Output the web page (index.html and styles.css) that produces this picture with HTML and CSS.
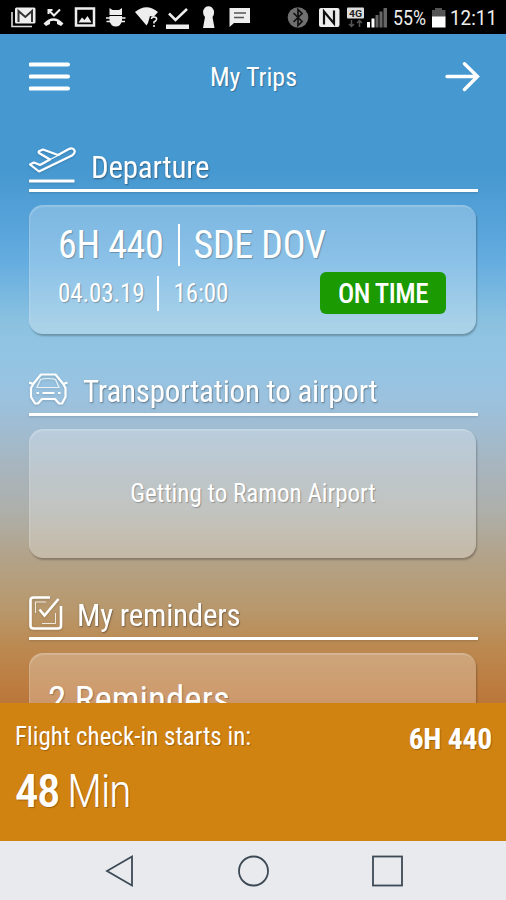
FILE: index.html
```html
<!DOCTYPE html>
<html lang="en">
<head>
    <meta charset="UTF-8">
    <meta name="viewport" content="width=device-width, initial-scale=1.0">
    <title>My Trips</title>
    <link rel="stylesheet" href="styles.css">
</head>
<body>
    <div class="status-bar">
        <svg class="status-icons" width="506" height="34" viewBox="0 0 506 34">
            <!-- mail -->
            <path d="M12 12V26.500H32" fill="none" stroke="#ddd" stroke-width="1.6"/>
            <rect x="15" y="7.500" width="20.500" height="16" rx="1.500" fill="#eee"/>
            <path d="M18.500 22V11L25.300 17L32 11V22" fill="none" stroke="#333" stroke-width="2"/>
            <!-- missed call -->
            <path d="M43.500 23.500Q53.500 13 63.500 23.500L61 26L57 24V21.500Q53.500 20 50 21.500V24L46 26Z" fill="#eee"/>
            <path d="M48.500 14V10H52.500M49 10.500L54 15.500L60 9.500" fill="none" stroke="#eee" stroke-width="2"/>
            <!-- picture -->
            <rect x="76" y="8.500" width="18" height="17" fill="none" stroke="#eee" stroke-width="2.500"/>
            <path d="M78.500 22.500L82 17.500L84.500 20L87.500 16L91.500 22.500Z" fill="#eee"/>
            <!-- debug -->
            <path d="M109.500 15V8L112.500 10H119L122 8V15ZM109.500 16V21Q111 26.500 115.800 26.500Q120.500 26.500 122 21V16Z" fill="#eee"/>
            <path d="M106 18H125.500M106.500 21.500H125" stroke="#eee" stroke-width="1.500"/>
            <!-- wifi -->
            <path d="M135 12Q146.500 2.500 158 12L153.500 17L150 16L148 23L146.500 25.500Z" fill="#eee"/>
            <path d="M151.500 19Q151.500 17 154 17Q157 17 156.500 19.500Q156 21 154 22V23.500M154 25V27" fill="none" stroke="#eee" stroke-width="1.600"/>
            <!-- download done -->
            <path d="M169 13.500L175.500 20L187 9" fill="none" stroke="#eee" stroke-width="2.500"/>
            <rect x="166" y="24.500" width="23" height="4.500" fill="#eee"/>
            <!-- keyhole -->
            <path d="M205 7.500Q208.500 5 212 7.500Q216 12 212.500 17L214.500 28H203L205 17Q201 12 205 7.500Z" fill="#eee"/>
            <!-- message -->
            <path d="M229.500 8H250V23H234L229.500 27Z" fill="#eee"/>
            <path d="M234 13H246M234 17.500H244" stroke="#555" stroke-width="1.500"/>
            <!-- bluetooth -->
            <circle cx="298" cy="17.500" r="10.300" fill="#707070"/>
            <path d="M293.500 13L302 21.500L298 25.500V9.500L302 13.500L293.500 22" fill="none" stroke="#111" stroke-width="1.700"/>
            <!-- nfc -->
            <rect x="319" y="8" width="20.500" height="19" rx="2" fill="#eee"/>
            <path d="M324 24.500V11.500L334 23.500V10.500" fill="none" stroke="#111" stroke-width="2.200"/>
            <!-- mobile data -->
            <rect x="347" y="7.500" width="17" height="11" rx="1" fill="#ddd"/>
            <path d="M351.500 20V27M349 24L351.500 26.500L354 24M359.500 27V20M357 23L359.500 20.500L362 23" fill="none" stroke="#555" stroke-width="1.500"/>
            <text class="network" x="349" y="16.500" textLength="13" lengthAdjust="spacingAndGlyphs">4G</text>
            <!-- signal -->
            <path d="M367 22H370V27.500H367ZM371.500 18.500H374.500V27.500H371.500Z" fill="#fff"/>
            <path d="M375.500 15H378.500V27.500H375.500ZM379.500 11.500H382.500V27.500H379.500ZM383.500 8H387V27.500H383.500Z" fill="#666"/>
            <!-- battery -->
            <path d="M432 10H435V8H442V10H445.500V17H432Z" fill="#555"/>
            <rect x="432" y="16.500" width="13.500" height="11" fill="#fff"/>
            <text class="status-text" x="393" y="25" textLength="33" lengthAdjust="spacingAndGlyphs">55%</text>
            <text class="status-text" x="450" y="25" textLength="47" lengthAdjust="spacingAndGlyphs">12:11</text>
        </svg>
    </div>

    <main class="trips">
        <header class="top-bar">
            <svg width="42" height="30" viewBox="0 0 42 30"><path d="M1.500 2.500H39M1.500 14.500H39M1.500 26.500H39" stroke="#fff" stroke-width="4" stroke-linecap="round"/></svg>
            <h1>My Trips</h1>
            <svg width="35" height="30" viewBox="0 0 35 30"><path d="M2 14.500H32M19.500 1.800L32.500 14.500L19.500 27.500" fill="none" stroke="#fff" stroke-width="3.400" stroke-linecap="round"/></svg>
        </header>

        <section>
            <h2 class="departure-title">
                <svg width="47" height="36" viewBox="0 0 47 36">
                    <path d="M1 17.500L5 15.500L11 18L21 12.500L10 6Q9 5 10.500 4L14 2.500L29 8L39 2.500Q44 0 45.500 3.500Q46.500 6 43 8.500L10 24.500Z" fill="none" stroke="#fff" stroke-width="2.2" stroke-linejoin="round"/>
                    <path d="M21 12.500L31 7.500" stroke="#fff" stroke-width="1.2"/>
                    <path d="M0 34H45.500" stroke="#fff" stroke-width="3"/>
                </svg>
                <span>Departure</span>
            </h2>
            <div class="card flight">
                <div class="flight-row flight-name"><span>6H 440</span><i></i><span>SDE DOV</span></div>
                <div class="flight-row flight-date">
                    <span>04.03.19</span><i></i><span>16:00</span>
                    <b class="badge">ON TIME</b>
                </div>
            </div>
        </section>

        <section>
            <h2 class="transport-title">
                <svg width="40" height="34" viewBox="0 0 40 34">
                    <g fill="none" stroke="#fff" stroke-width="2.2" stroke-linejoin="round">
                        <path d="M12 1.500H26.500L33.500 10L36.500 15V24L33 30.500H30L26 26H13L9 30.500H6L2 24V15L5 10Z"/>
                        <path d="M0 9.500L4 11M38.500 9.500L34.500 11"/>
                        <path d="M8 14.500L11.500 6.500Q19 4.500 26.500 6.500L30 14.500Z" stroke-width="1.2" opacity="0.8"/>
                        <path d="M13.500 20H25.500M7.500 20H10M29 20H31.500" stroke-width="1.8"/>
                    </g>
                </svg>
                <span>Transportation to airport</span>
            </h2>
            <div class="card transport"><span>Getting to Ramon Airport</span></div>
        </section>

        <section>
            <h2 class="reminders-title">
                <svg width="35" height="36" viewBox="0 0 35 36">
                    <g fill="none" stroke="#fff" stroke-width="2.6">
                        <path d="M21 2.500H4.500Q1.500 2.500 1.500 5.500V30.500Q1.500 33.500 4.500 33.500H29Q32 33.500 32 30.500V11"/>
                        <path d="M10.500 14.500L15.500 20.500L29.500 4"/>
                        <path d="M17 7H6.500V18M13 28.500H26.500V18" stroke-width="1" opacity="0.8"/>
                    </g>
                </svg>
                <span>My reminders</span>
            </h2>
            <div class="card reminders"><span>2 Reminders</span></div>
        </section>
    </main>

    <footer class="checkin">
        <div class="checkin-row">
            <span>Flight check-in starts in:</span>
            <b>6H 440</b>
        </div>
        <div class="countdown"><b>48</b><span>Min</span></div>
    </footer>

    <nav class="nav-bar">
        <svg width="32" height="34" viewBox="0 0 32 34"><path d="M4 17L29 2.500V31.500Z"/></svg>
        <svg width="32" height="34" viewBox="0 0 32 34"><circle cx="16.500" cy="17" r="14.500"/></svg>
        <svg width="32" height="34" viewBox="0 0 32 34"><rect x="2" y="2.500" width="29" height="29"/></svg>
    </nav>
</body>
</html>
```

FILE: styles.css
```css
* {
    box-sizing: border-box;
}
body {
    margin: 0;
    width: 506px;
    height: 900px;
    overflow: hidden;
    display: flex;
    flex-direction: column;
    font-family: "Roboto Condensed", Roboto, sans-serif;
    font-stretch: 75%;
    color: #fff;
}
svg {
    flex: none;
}
.status-bar {
    height: 34px;
    flex: none;
    background: #000;
}
.status-icons {
    display: block;
}
.status-text {
    font: 400 19.5px Roboto, sans-serif;
    fill: #eee;
}
.network {
    font: bold 9.5px Roboto, sans-serif;
    fill: #222;
}
.trips {
    height: 669px;
    flex: none;
    padding: 0 28px 0 29px;
    overflow: hidden;
    background: linear-gradient(#4698d0 0, #4698d0 135px, #5aa5db 200px, #66aee0 230px, #8cc2e0 290px, #92c5e3 325px, #9bc2df 365px, #a1bbcf 400px, #a9b3b8 445px, #adb0ab 475px, #b3a288 525px, #b8986c 575px, #bb8a53 610px, #bd7d40 650px, #ba763b 669px);
    text-shadow: 1px 1px 1px rgba(0,0,0,0.25);
}
.top-bar {
    height: 76px;
    margin-right: -2px;
    padding-top: 10px;
    display: flex;
    align-items: center;
    justify-content: space-between;
}
h1 {
    margin: 0 9px 0 0;
    font-size: 26px;
    font-weight: 400;
}
h2 {
    height: 82px;
    margin: 0 0 13px;
    padding-bottom: 6px;
    border-bottom: 3px solid #fff;
    display: flex;
    align-items: flex-end;
    font-size: 31px;
    line-height: 30px;
    font-weight: 400;
    letter-spacing: -0.22px;
    filter: drop-shadow(0 1px 1px rgba(0,0,0,0.15));
}
.departure-title {
    gap: 15px;
}
.transport-title {
    gap: 14px;
}
.reminders-title {
    gap: 13px;
}
.card {
    width: 447px;
    height: 129px;
    border-radius: 14px;
    background: rgba(255,255,255,0.25);
    box-shadow: 1px 2px 2px rgba(0,0,0,0.25), inset 1px 2px 1px rgba(255,255,255,0.18);
}
.flight {
    padding: 18px 30px 0 29px;
}
.flight-row {
    display: flex;
    align-items: center;
}
.flight-row i {
    width: 2px;
    background: #fff;
}
.flight-name {
    height: 43px;
    font-size: 38px;
    letter-spacing: -0.3px;
}
.flight-name i {
    height: 42px;
    margin: 0 14px;
}
.flight-date {
    height: 54px;
    font-size: 25px;
    letter-spacing: -0.1px;
}
.flight-date i {
    height: 35px;
    margin: 0 14px 0 13px;
}
.badge {
    width: 126px;
    height: 42px;
    margin-left: auto;
    border-radius: 6px;
    background: #1b9a02;
    font-size: 27px;
    font-weight: 500;
    letter-spacing: -0.5px;
    line-height: 44px;
    text-align: center;
    text-shadow: none;
}
.transport {
    display: flex;
    align-items: center;
    justify-content: center;
    padding-left: 1px;
    font-size: 25px;
}
.reminders {
    padding: 27px 19px;
    font-size: 37px;
    line-height: 40px;
}
.checkin {
    height: 138px;
    flex: none;
    padding: 17px 14px 0 15px;
    background: #d18312;
    text-shadow: 1px 1px 1px rgba(0,0,0,0.25);
}
.checkin-row {
    height: 39px;
    display: flex;
    justify-content: space-between;
    font-size: 25px;
    line-height: 34px;
}
.checkin-row b {
    font-size: 29.5px;
    line-height: 39px;
    letter-spacing: -0.2px;
}
.countdown {
    display: flex;
    gap: 8px;
    font-size: 47px;
    line-height: 64px;
    font-weight: 300;
    letter-spacing: -1.5px;
}
.countdown b {
    font-weight: 500;
}
.nav-bar {
    height: 59px;
    flex: none;
    padding: 0 103px;
    display: flex;
    align-items: center;
    justify-content: space-between;
    background: #e8eaee;
}
.nav-bar svg {
    fill: none;
    stroke: #3d4a55;
    stroke-width: 1.8;
}
```
